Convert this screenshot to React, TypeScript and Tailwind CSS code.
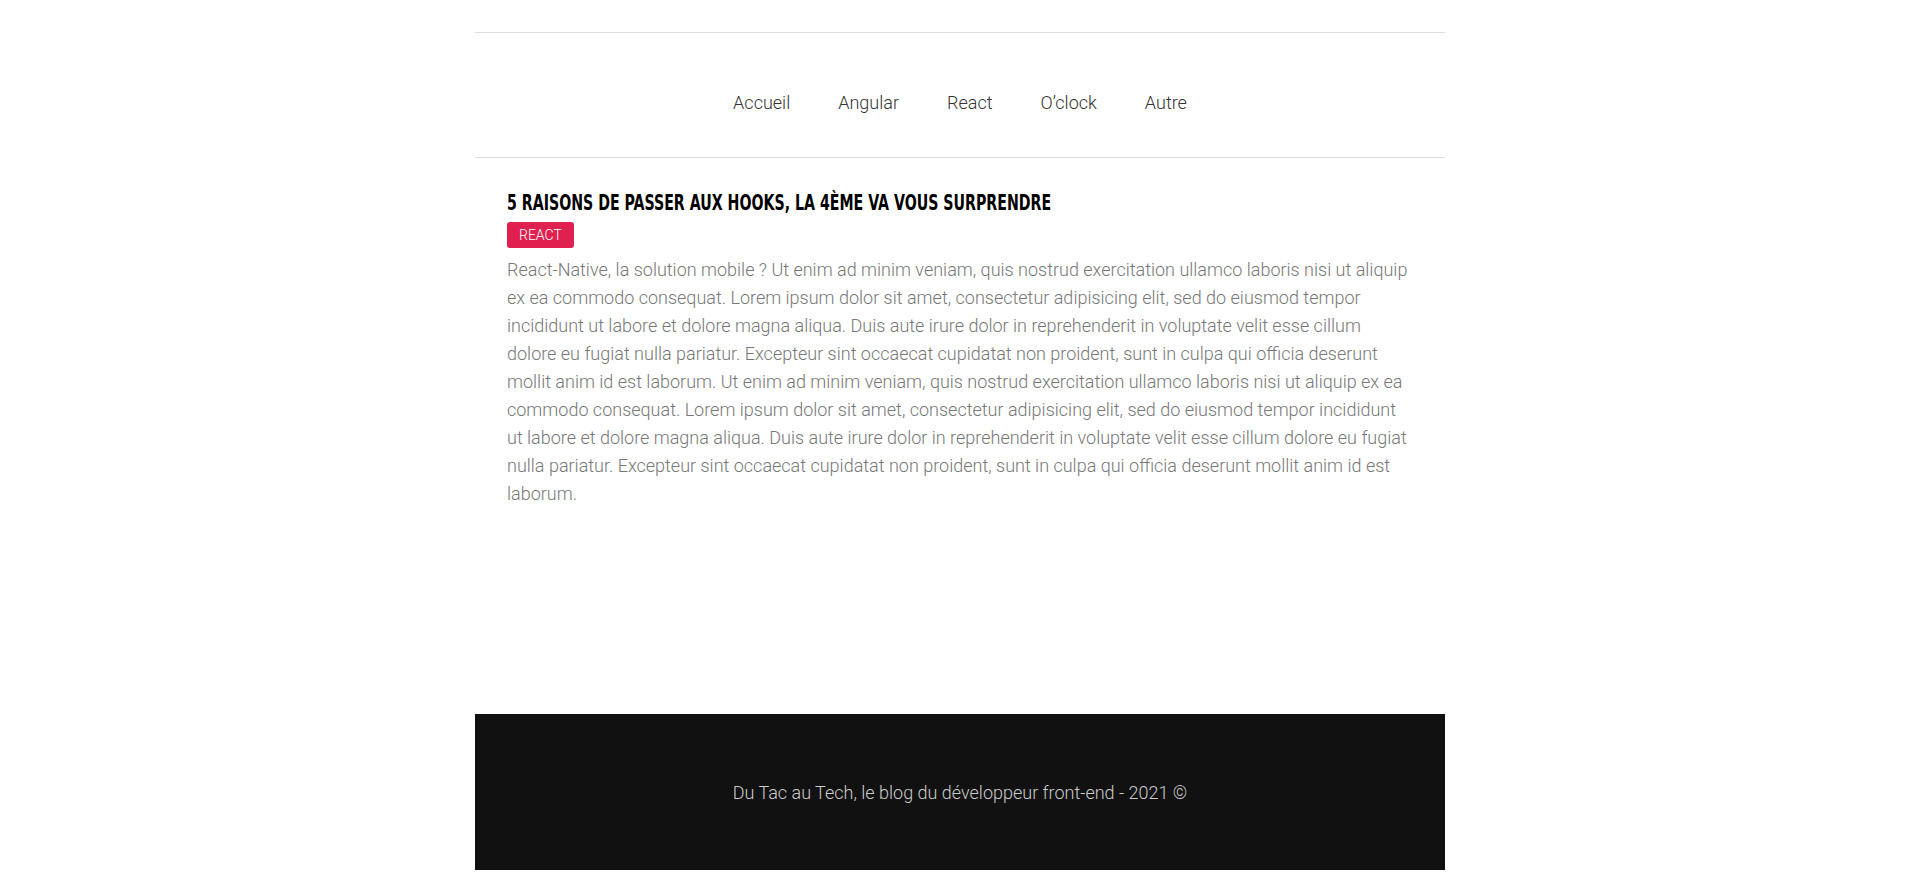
import React from "react";

const navItems = ["Accueil", "Angular", "React", "O’clock", "Autre"];

const body =
  "React-Native, la solution mobile ? Ut enim ad minim veniam, quis nostrud exercitation ullamco laboris nisi ut aliquip ex ea commodo consequat. Lorem ipsum dolor sit amet, consectetur adipisicing elit, sed do eiusmod tempor incididunt ut labore et dolore magna aliqua. Duis aute irure dolor in reprehenderit in voluptate velit esse cillum dolore eu fugiat nulla pariatur. Excepteur sint occaecat cupidatat non proident, sunt in culpa qui officia deserunt mollit anim id est laborum. Ut enim ad minim veniam, quis nostrud exercitation ullamco laboris nisi ut aliquip ex ea commodo consequat. Lorem ipsum dolor sit amet, consectetur adipisicing elit, sed do eiusmod tempor incididunt ut labore et dolore magna aliqua. Duis aute irure dolor in reprehenderit in voluptate velit esse cillum dolore eu fugiat nulla pariatur. Excepteur sint occaecat cupidatat non proident, sunt in culpa qui officia deserunt mollit anim id est laborum.";

export default function App() {
  return (
    <div className="min-h-screen bg-white flex flex-col pt-8 pb-2 font-['Roboto',sans-serif] font-light">
      <div className="w-[970px] mx-auto flex flex-col flex-1">
        <header className="border-t border-b border-[#dddddd] h-[126px] flex items-center justify-center">
          <nav className="flex gap-[48px] text-[18px] text-[#333333] pt-[16px]">
            {navItems.map((n) => (
              <a key={n} href="#" className="leading-none">
                {n}
              </a>
            ))}
          </nav>
        </header>
        <main className="flex-1 px-8 pt-[33px]">
          <h1 className="font-['DejaVu_Sans_Condensed','DejaVu_Sans',sans-serif] font-bold text-[21px] leading-[24px] text-black uppercase origin-left scale-x-[0.75] whitespace-nowrap">
            5 raisons de passer aux hooks, la 4ème va vous surprendre
          </h1>
          <span className="inline-block mt-[7px] bg-[#e0204f] text-white text-[14px] leading-[26px] px-[12px] rounded-[3px] uppercase">
            React
          </span>
          <p className="mt-[8px] text-[18px] leading-[28px] text-[#777777]">{body}</p>
        </main>
        <footer className="bg-[#111111] h-[156px] flex items-center justify-center text-[18px] text-[#cccccc]">
          Du Tac au Tech, le blog du développeur front-end - 2021 ©
        </footer>
      </div>
    </div>
  );
}
